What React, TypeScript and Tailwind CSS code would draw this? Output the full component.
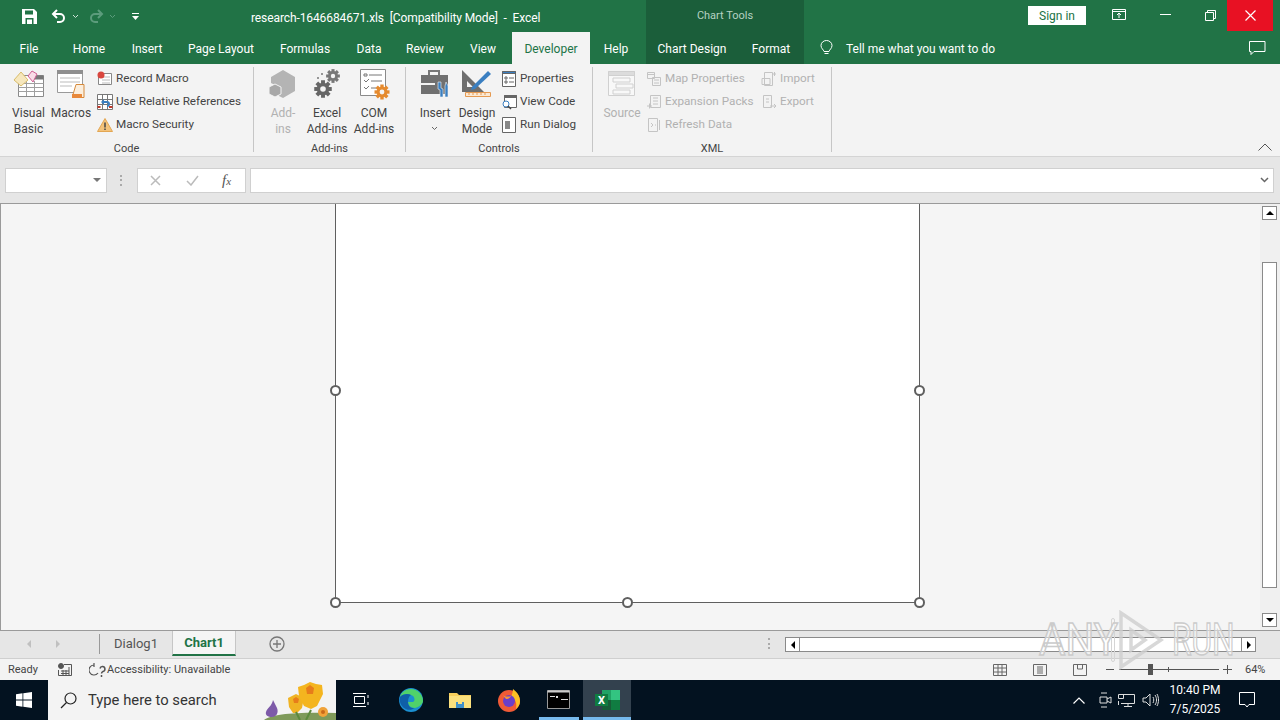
const uiFont = { fontFamily: 'Roboto, "Liberation Sans", sans-serif' };

function Undo({ className }: { className?: string }) {
  return (
    <svg className={className} width="16" height="16" viewBox="0 0 16 16" fill="none" stroke="currentColor" strokeWidth="2">
      <path d="M6 2 2 6l4 4" />
      <path d="M2 6h7a4 4 0 0 1 4 4v0a4 4 0 0 1-4 4H6" />
    </svg>
  );
}

function Caret({ className }: { className?: string }) {
  return (
    <svg className={className} width="7" height="5" viewBox="0 0 7 5" fill="none" stroke="currentColor">
      <path d="M1 1l2.5 2.5L6 1" />
    </svg>
  );
}

function TitleBar() {
  return (
    <div className="flex h-8 items-stretch text-white">
      <div className="flex w-[646px] items-center">
        <svg className="ml-[22px]" width="15" height="15" viewBox="0 0 15 15">
          <path d="M0 0h12l3 3v12H0z" fill="#fff" />
          <path d="M3 1.500h8v4H3zM3.500 9h8v6h-8z" fill="#217346" />
          <path d="M5 10.500h5V15H5z" fill="#fff" />
        </svg>
        <Undo className="ml-[14px]" />
        <Caret className="ml-[5px] text-[#cfe3d8]" />
        <Undo className="ml-[9px] -scale-x-100 text-[#5c9c7c]" />
        <Caret className="ml-[5px] text-[#5c9c7c]" />
        <svg className="ml-[15px]" width="9" height="9" viewBox="0 0 9 9" fill="#fff">
          <path d="M1 1h7v1H1zM1 4h7L4.500 8z" />
        </svg>
        <span className="ml-[111px] whitespace-pre pt-[3px] text-[12px] tracking-[-0.1px]">research-1646684671.xls  [Compatibility Mode]  -  Excel</span>
      </div>
      <div className="flex w-[158px] items-center justify-center bg-[#1b5e3a] pt-[1px] text-[11px] text-[#b5d2c2]">Chart Tools</div>
      <div className="flex flex-1 items-start">
        <div className="ml-[224px] mt-[6px] flex h-[19px] w-[58px] items-center justify-center bg-white text-[12px] text-[#217346]">Sign in</div>
        <svg className="ml-[26px] mt-[9px]" width="14" height="12" viewBox="0 0 14 12" fill="none" stroke="#fff">
          <path d="M.5.500h13v10H.5zM.5 2.500h13M7 9V4.500M5 6l2-2 2 2" />
        </svg>
        <div className="ml-[34px] mt-[14px] h-px w-[11px] bg-white" />
        <svg className="ml-[34px] mt-[10px]" width="11" height="11" viewBox="0 0 11 11" fill="none" stroke="#fff">
          <path d="M.5 2.500h8v8h-8zM2.500 2.500v-2h8v8h-2" />
        </svg>
        <div className="ml-[11px] flex h-[31px] w-[46px] items-center justify-center bg-[#e81123]">
          <svg width="11" height="11" viewBox="0 0 11 11" stroke="#fff" strokeWidth="1.2">
            <path d="M.5.500l10 10M10.500.500l-10 10" />
          </svg>
        </div>
      </div>
    </div>
  );
}

function TabLabel({ label, w, active }: { label: string; w: number; active?: boolean }) {
  return (
    <div
      className={`flex shrink-0 items-center justify-center pt-[1px] ${active ? "bg-[#f3f3f3] text-[#217346]" : "text-white"}`}
      style={{ width: w }}
    >
      {label}
    </div>
  );
}

function TabRow() {
  return (
    <div className="flex h-8 items-stretch text-[12px]">
      <TabLabel label="File" w={58} />
      <TabLabel label="Home" w={62} />
      <TabLabel label="Insert" w={54} />
      <TabLabel label="Page Layout" w={94} />
      <TabLabel label="Formulas" w={74} />
      <TabLabel label="Data" w={54} />
      <TabLabel label="Review" w={58} />
      <TabLabel label="View" w={58} />
      <TabLabel label="Developer" w={78} active />
      <TabLabel label="Help" w={52} />
      <div className="w-[4px]" />
      <div className="flex w-[158px] bg-[#1b5e3a]">
        <TabLabel label="Chart Design" w={92} />
        <TabLabel label="Format" w={66} />
      </div>
      <div className="flex flex-1 items-center text-white">
        <svg className="ml-[16px]" width="13" height="16" viewBox="0 0 13 16" fill="none" stroke="#fff">
          <path d="M4 11.500C3.500 9.500 1 8.500 1 5.500a5.500 5 0 0 1 11 0c0 3-2.500 4-3 6zM4.500 13.500h4" />
        </svg>
        <span className="ml-[13px] pt-[1px]">Tell me what you want to do</span>
        <svg className="ml-auto mr-[14px]" width="17" height="15" viewBox="0 0 17 15" fill="none" stroke="#fff">
          <path d="M.5.500h15.500v10H5l-3 3v-3H.5z" />
        </svg>
      </div>
    </div>
  );
}

function BigButton({ icon, lines, w, disabled, caret }: { icon: React.ReactNode; lines: string[]; w: number; disabled?: boolean; caret?: boolean }) {
  return (
    <div className={`flex shrink-0 flex-col items-center ${disabled ? "text-[#b1b1b1]" : "text-[#444]"}`} style={{ width: w }}>
      <div className="flex h-[34px] items-center justify-center">{icon}</div>
      <div className="mt-[4px] whitespace-nowrap text-center text-[12px] leading-[16px]">
        {lines.map((l) => (
          <div key={l}>{l}</div>
        ))}
        {caret ? <Caret className="mx-auto mt-[5px] text-[#666]" /> : null}
      </div>
    </div>
  );
}

function SmallButton({ icon, label, disabled }: { icon: React.ReactNode; label: string; disabled?: boolean }) {
  return (
    <div className={`flex h-[23px] items-center whitespace-nowrap text-[11.7px] ${disabled ? "text-[#b1b1b1]" : "text-[#444]"}`}>
      <span className="flex w-[16px] justify-center">{icon}</span>
      <span className="ml-[3px]">{label}</span>
    </div>
  );
}

function Group({ label, w, children }: { label: string; w: number; children: React.ReactNode }) {
  return (
    <div className="mt-[3px] flex h-[85px] shrink-0 flex-col border-r border-[#c6c6c6]" style={{ width: w }}>
      <div className="flex flex-1 items-start">{children}</div>
      <div className="-mb-[4px] text-center text-[11px] leading-[15px] text-[#444]">{label}</div>
    </div>
  );
}

function VisualBasicIcon() {
  return (
    <svg width="32" height="30" viewBox="0 0 32 30">
      <path d="M5.500 6.500h25v21h-25z" fill="#fff" stroke="#8a8a8a" />
      <path d="M20 6.500h10.500v4H20z" fill="#777" />
      <path d="M5.500 14.500h25M5.500 18.500h25M5.500 22.500h25M13.500 12v15M21.500 12v15" stroke="#a0a0a0" />
      <path d="M1 11l7-8 7 8-7 6z" fill="#f6e7bd" stroke="#d9bd6a" />
      <path d="M15 7l4-5 5 3-4 8z" fill="#f9dce7" stroke="#cf5f93" />
    </svg>
  );
}

function MacrosIcon() {
  return (
    <svg width="30" height="30" viewBox="0 0 30 30">
      <path d="M1.500 1.500h25v22h-25z" fill="#fff" stroke="#9a9a9a" />
      <path d="M1 1h26v4H1z" fill="#8f8f8f" />
      <path d="M4 9h20M4 13h20M4 17h12" stroke="#bbb" />
      <path d="M20 15.500h8v13H17v-3z" fill="#fbeedd" stroke="#d58a3c" />
      <path d="M16 25h10v4H16z" fill="#e8883a" />
    </svg>
  );
}

function AddinsIcon() {
  return (
    <svg width="28" height="30" viewBox="0 0 28 30" fill="#b4b4b4">
      <path d="M14 1l12 7v14l-12 7-4-2v-9l-8-4V8z" />
      <path d="M6 15l6 3v7l-6 3-6-3v-7z" fill="#a8a8a8" stroke="#f3f3f3" />
    </svg>
  );
}

function Gear({ x, y, r, fill }: { x: number; y: number; r: number; fill: string }) {
  const teeth = [0, 45, 90, 135];
  return (
    <g transform={`translate(${x} ${y})`}>
      {teeth.map((a) => (
        <rect key={a} x={-r * 0.28} y={-r * 1.25} width={r * 0.56} height={r * 2.5} fill={fill} transform={`rotate(${a})`} />
      ))}
      <circle r={r * 0.9} fill={fill} />
      <circle r={r * 0.4} fill="#f3f3f3" />
    </g>
  );
}

function ExcelAddinsIcon() {
  return (
    <svg width="28" height="32" viewBox="0 0 28 32">
      <Gear x={20} y={8} r={5.500} fill="#777" />
      <Gear x={10} y={21} r={7} fill="#666" />
      <circle cx="5" cy="10" r="1" fill="#777" />
      <circle cx="9" cy="6" r="1" fill="#777" />
    </svg>
  );
}

function ComAddinsIcon() {
  return (
    <svg width="32" height="32" viewBox="0 0 32 32">
      <path d="M2.500 1.500h25v26h-25z" fill="#fff" stroke="#8a8a8a" />
      <path d="M6 6h3v2H6zM11 7h13M6 12l2 2 3-3M13 13h11M6 19l2 2 3-3M13 20h5" fill="none" stroke="#777" />
      <Gear x={24} y={24} r={6} fill="#e58a2e" />
    </svg>
  );
}

function InsertIcon() {
  return (
    <svg width="30" height="30" viewBox="0 0 30 30">
      <path d="M9 6V2h10v4" fill="none" stroke="#777" strokeWidth="2" />
      <path d="M1 6h27v19H1z" fill="#707070" />
      <path d="M1 14h14v2H1z" fill="#f3f3f3" />
      <path d="M18 13h3v6l2 1v8h-3v-7l-2-1zM26 13l-1 4v11h3V17z" fill="#3a7fc1" stroke="#f3f3f3" strokeWidth=".6" />
    </svg>
  );
}

function DesignModeIcon() {
  return (
    <svg width="32" height="32" viewBox="0 0 32 32">
      <path d="M1 2l22 22H1zM6 13v6h6z" fill="#6e6e6e" fillRule="evenodd" />
      <path d="M11 19L27 3l3 3-16 15-4 1z" fill="#3a7fc1" />
      <path d="M4.500 24.500h25v4h-25z" fill="#fbe9d4" stroke="#e59a52" />
      <path d="M8 25v2M12 25v2M16 25v2M20 25v2M24 25v2" stroke="#e59a52" />
    </svg>
  );
}

function Doc({ children, stroke = "#666" }: { children?: React.ReactNode; stroke?: string }) {
  return (
    <svg width="16" height="16" viewBox="0 0 16 16" fill="none" stroke={stroke}>
      {children}
    </svg>
  );
}

function SourceIcon() {
  return (
    <svg width="30" height="30" viewBox="0 0 30 30" fill="none" stroke="#d0d0d0">
      <path d="M1.500 2.500h26v24h-26z" fill="#f8f8f8" />
      <path d="M1.500 2.500h26v4h-26z" fill="#dcdcdc" />
      <path d="M6 9h17v4H6zM9 15h17v4H9zM6 21h17v4H6z" />
    </svg>
  );
}

function Ribbon() {
  return (
    <div className="relative flex h-[93px] border-b border-[#d4d4d4] bg-[#f3f3f3]">
      <Group label="Code" w={254}>
        <div className="flex pl-[5px]">
          <BigButton w={47} icon={<VisualBasicIcon />} lines={["Visual", "Basic"]} />
          <BigButton w={38} icon={<MacrosIcon />} lines={["Macros"]} />
          <div className="ml-[7px] flex flex-col">
            <SmallButton
              label="Record Macro"
              icon={
                <svg width="16" height="16" viewBox="0 0 16 16">
                  <path d="M1.500 2.500h13v11h-13z" fill="#fff" stroke="#888" />
                  <path d="M5 6h8M5 9h8M5 12h8" stroke="#bbb" />
                  <circle cx="4" cy="4" r="3.500" fill="#d9463e" />
                </svg>
              }
            />
            <SmallButton
              label="Use Relative References"
              icon={
                <svg width="16" height="16" viewBox="0 0 16 16" fill="none">
                  <path d="M.500.500h15v15H.500zM.500 5.500h15M.500 10.500h15M5.500.500v15M10.500.500v15" fill="#fff" stroke="#777" />
                  <path d="M4 8l3-3v2h3a3 3 0 0 1 0 6v-2a1 1 0 0 0 0-2H7v2z" fill="#3a7fc1" />
                  <path d="M.500 13h3M12 13h3.500" stroke="#c0392b" strokeWidth="2" />
                </svg>
              }
            />
            <SmallButton
              label="Macro Security"
              icon={
                <svg width="16" height="14" viewBox="0 0 16 14">
                  <path d="M8 .500l7.500 13H.500z" fill="#f3c27a" stroke="#e3a652" />
                  <path d="M7.250 4.500h1.500v5h-1.500zM7.250 10.500h1.500V12h-1.500z" fill="#444" />
                </svg>
              }
            />
          </div>
        </div>
      </Group>
      <Group label="Add-ins" w={152}>
        <div className="flex pl-[6px]">
          <BigButton w={46} icon={<AddinsIcon />} lines={["Add-", "ins"]} disabled />
          <BigButton w={42} icon={<ExcelAddinsIcon />} lines={["Excel", "Add-ins"]} />
          <BigButton w={52} icon={<ComAddinsIcon />} lines={["COM", "Add-ins"]} />
        </div>
      </Group>
      <Group label="Controls" w={187}>
        <div className="flex pl-[8px]">
          <BigButton w={42} icon={<InsertIcon />} lines={["Insert"]} caret />
          <BigButton w={42} icon={<DesignModeIcon />} lines={["Design", "Mode"]} />
          <div className="ml-[3px] flex flex-col">
            <SmallButton
              label="Properties"
              icon={
                <Doc>
                  <path d="M1.500 .500h13v15h-13z" fill="#fff" />
                  <path d="M1.500 .500h13v2h-13z" fill="#3a7fc1" />
                  <path d="M4 6h2v2H4zM8 7h5M4 10h2v2H4zM8 11h5" />
                </Doc>
              }
            />
            <SmallButton
              label="View Code"
              icon={
                <Doc>
                  <path d="M3.500 1.500h12v12h-12z" fill="#fff" />
                  <path d="M3.500 1.500h12v2h-12z" fill="#666" />
                  <circle cx="5" cy="10" r="3" stroke="#3a7fc1" fill="#fff" />
                  <path d="M7 12l3 3" stroke="#444" strokeWidth="1.500" />
                </Doc>
              }
            />
            <SmallButton
              label="Run Dialog"
              icon={
                <Doc>
                  <path d="M1.500 .500h13v15h-13z" fill="#fff" />
                  <path d="M4 4h5v8H4z" fill="#888" stroke="none" />
                </Doc>
              }
            />
          </div>
        </div>
      </Group>
      <Group label="XML" w={239}>
        <div className="flex pl-[8px]">
          <BigButton w={42} icon={<SourceIcon />} lines={["Source"]} disabled />
          <div className="ml-[3px] flex w-[115px] flex-col">
            <SmallButton disabled label="Map Properties" icon={<Doc stroke="#c4c4c4"><path d="M1.500 1.500h7v6h-7zM6.500 6.500h8v8h-8zM1.500 3.500h7M8 9h5M8 12h5" /></Doc>} />
            <SmallButton disabled label="Expansion Packs" icon={<Doc stroke="#c4c4c4"><path d="M4.500 1.500h10v12h-10zM7 4h5M7 7h5M7 10h5M1 12h5M3.500 9.500v5" /></Doc>} />
            <SmallButton disabled label="Refresh Data" icon={<Doc stroke="#c4c4c4"><path d="M2.500 1.500h9v13h-9zM13.500 3v10M5 6l2 2-2 2M9 8h1" /></Doc>} />
          </div>
          <div className="flex flex-col">
            <SmallButton disabled label="Import" icon={<Doc stroke="#c4c4c4"><path d="M3.500 1.500h8v13h-8zM1 7.500h8v6H1zM12 3h3M13.500 1v4" /></Doc>} />
            <SmallButton disabled label="Export" icon={<Doc stroke="#c4c4c4"><path d="M2.500 1.500h8v12h-8zM5 5h3M5 8h3M9 12h6M13 10l2 2-2 2" /></Doc>} />
          </div>
        </div>
      </Group>
      <svg className="absolute right-[8px] top-[79px]" width="14" height="8" viewBox="0 0 14 8" fill="none" stroke="#555">
        <path d="M.5 7.500l6.500-6.500 6.500 6.500" />
      </svg>
    </div>
  );
}

function FormulaBar() {
  return (
    <div className="flex h-[46px] items-center bg-[#e6e6e6] pl-[5px] pr-[6px]">
      <div className="flex h-[25px] w-[102px] items-center justify-end border border-[#d0d0d0] bg-white pr-[5px]">
        <div className="h-0 w-0 border-x-[4px] border-t-[4px] border-x-transparent border-t-[#777]" />
      </div>
      <div className="ml-[13px] flex h-[11px] w-[3px] flex-col justify-between">
        <div className="h-[2px] w-[2px] bg-[#aaa]" />
        <div className="h-[2px] w-[2px] bg-[#aaa]" />
        <div className="h-[2px] w-[2px] bg-[#aaa]" />
      </div>
      <div className="ml-[14px] flex h-[25px] w-[109px] items-center border border-[#d0d0d0] bg-white">
        <svg className="ml-[12px]" width="11" height="11" viewBox="0 0 11 11" stroke="#bbb" strokeWidth="1.5">
          <path d="M1 1l9 9M10 1l-9 9" />
        </svg>
        <svg className="ml-[25px]" width="13" height="11" viewBox="0 0 13 11" fill="none" stroke="#bbb" strokeWidth="1.500">
          <path d="M1 6l4 4 7-9" />
        </svg>
        <span className="ml-[23px] text-[15px] italic leading-none text-[#555]" style={{ fontFamily: '"Liberation Serif", serif' }}>
          f<span className="text-[11px]">x</span>
        </span>
      </div>
      <div className="ml-[4px] flex h-[25px] flex-1 items-center justify-end border border-[#d0d0d0] bg-white pr-[4px]">
        <svg width="9" height="6" viewBox="0 0 9 6" fill="none" stroke="#666" strokeWidth="1.500">
          <path d="M1 1l3.500 3.500L8 1" />
        </svg>
      </div>
    </div>
  );
}

function Handle({ className }: { className: string }) {
  return <div className={`absolute h-[11px] w-[11px] rounded-full border-2 border-[#5f5f5f] bg-white ${className}`} />;
}

function SheetArea() {
  return (
    <div className="flex h-[428px] border-y border-l border-[#9a9a9a] bg-[#f5f5f5]">
      <div className="flex-1 pl-[334px]">
        <div className="relative h-[399px] w-[585px] border-x border-b border-[#5f5f5f] bg-white">
          <Handle className="-left-[6px] top-[181px]" />
          <Handle className="-right-[6px] top-[181px]" />
          <Handle className="-bottom-[6px] -left-[6px]" />
          <Handle className="-bottom-[6px] left-[286px]" />
          <Handle className="-bottom-[6px] -right-[6px]" />
        </div>
      </div>
      <div className="flex w-[20px] flex-col items-center bg-[#f0f0f0] pr-[1px] pt-[2px]">
        <ScrollArrow dir="up" />
        <div className="mt-[42px] h-[326px] w-[15px] border border-[#8a8a8a] bg-white" />
        <div className="flex-1" />
        <ScrollArrow dir="down" className="mb-[3px]" />
      </div>
    </div>
  );
}

function ScrollArrow({ dir, className = "" }: { dir: "up" | "down"; className?: string }) {
  const arrow = dir === "up"
    ? "border-x-[4px] border-b-[4px] border-x-transparent border-b-black"
    : "border-x-[4px] border-t-[4px] border-x-transparent border-t-black";
  return (
    <div className={`flex h-[14px] w-[15px] shrink-0 items-center justify-center border border-[#8a8a8a] bg-white ${className}`}>
      <div className={`h-0 w-0 ${arrow}`} />
    </div>
  );
}

function SheetTabs() {
  return (
    <div className="flex h-[27px] bg-[#e6e6e6]">
      <div className="flex h-[26px] w-[100px] items-center">
        <div className="ml-[27px] h-0 w-0 border-y-[4px] border-r-[4px] border-y-transparent border-r-[#c0c0c0]" />
        <div className="ml-[25px] h-0 w-0 border-y-[4px] border-l-[4px] border-y-transparent border-l-[#c0c0c0]" />
        <div className="ml-auto h-[20px] w-px bg-[#999]" />
      </div>
      <div className="flex h-[25px] w-[72px] items-center justify-center text-[13px] text-[#555]">Dialog1</div>
      <div className="flex h-[25px] w-[64px] items-center justify-center border-x border-b-2 border-x-[#c6c6c6] border-b-[#217346] bg-[#f5f5f5] text-[13px] font-bold text-[#217346]">Chart1</div>
      <svg className="ml-[33px] mt-[5px]" width="16" height="16" viewBox="0 0 16 16" fill="none" stroke="#777" strokeWidth="1.300">
        <circle cx="8" cy="8" r="7" />
        <path d="M8 4v8M4 8h8" />
      </svg>
      <div className="ml-[483px] mt-[7px] flex h-[11px] w-[3px] flex-col justify-between">
        <div className="h-[2px] w-[2px] bg-[#aaa]" />
        <div className="h-[2px] w-[2px] bg-[#aaa]" />
        <div className="h-[2px] w-[2px] bg-[#aaa]" />
      </div>
      <div className="ml-[14px] mt-[6px] flex h-[15px] w-[471px] border border-[#8a8a8a] bg-white">
        <div className="flex h-full w-[14px] items-center justify-center border-r border-[#8a8a8a]">
          <div className="h-0 w-0 border-y-[4px] border-r-[4px] border-y-transparent border-r-black" />
        </div>
        <div className="flex-1" />
        <div className="flex h-full w-[14px] items-center justify-center border-l border-[#8a8a8a]">
          <div className="h-0 w-0 border-y-[4px] border-l-[4px] border-y-transparent border-l-black" />
        </div>
      </div>
    </div>
  );
}

function StatusBar() {
  return (
    <div className="flex h-[22px] items-center border-t border-[#cfcfcf] bg-[#f3f3f3] text-[11px] text-[#444]">
      <span className="ml-[8px] pt-[1px]">Ready</span>
      <svg className="ml-[20px]" width="14" height="13" viewBox="0 0 14 13" fill="none" stroke="#555">
        <circle cx="3" cy="3" r="2.500" fill="#555" />
        <path d="M6 1.500h7.500v11H.500V7M3 8h8M3 10.500h8M5 7v5M8 7v5M11 4v8" />
      </svg>
      <svg className="ml-[17px]" width="17" height="14" viewBox="0 0 17 14" fill="none" stroke="#555" strokeWidth="1.200">
        <path d="M5 2a5 5 0 1 0 4 8M5 0v4" />
        <path d="M11 5.500a2.500 2.500 0 1 1 3 3c-1 .5-1.500 1-1.500 2M12.500 12v2" strokeWidth="1.500" />
      </svg>
      <span className="ml-[1px] pt-[1px]">Accessibility: Unavailable</span>
      <div className="ml-auto flex items-center">
        <svg width="14" height="12" viewBox="0 0 14 12" fill="none" stroke="#666">
          <path d="M.5.500h13v11H.5zM.5 4h13M.5 8h13M5 .5v11M9 .5v11" />
        </svg>
        <svg className="ml-[26px]" width="14" height="12" viewBox="0 0 14 12" fill="none" stroke="#666">
          <path d="M.5.500h13v11H.5zM4 3h6M4 5h6M4 7h6M4 9h6" />
        </svg>
        <svg className="ml-[26px]" width="14" height="12" viewBox="0 0 14 12" fill="none" stroke="#666">
          <path d="M.5.500h13v11H.5zM4.500.500V5h5V.5" />
        </svg>
        <div className="ml-[19px] h-px w-[8px] bg-[#555]" />
        <div className="relative ml-[5px] h-px w-[100px] bg-[#555]">
          <div className="absolute left-[29px] -top-[5px] h-[11px] w-[5px] bg-[#555]" />
          <div className="absolute left-[49px] -top-[2px] h-[5px] w-px bg-[#555]" />
        </div>
        <svg className="ml-[4px]" width="9" height="9" viewBox="0 0 9 9" stroke="#555">
          <path d="M0 4.500h9M4.500 0v9" />
        </svg>
        <span className="ml-[13px] mr-[14px] w-[21px] pt-[1px]">64%</span>
      </div>
    </div>
  );
}

function FlowerArt() {
  return (
    <svg className="ml-auto shrink-0" width="80" height="40" viewBox="0 0 80 40">
      <path d="M8 40c8-6 30-8 72-7v7z" fill="#7f9a5a" />
      <path d="M17 20l4 8c2 5-1 9-5 9-4 0-7-2-6-5 1-4 6-6 7-12z" fill="#7d5aa8" />
      <path d="M32 18l4-2 4-2 4 2 4 1-2 11-5 5h-4l-4-6z" fill="#f0b323" />
      <path d="M37 19l3-2 3 2-1 4h-4z" fill="#e77d1a" />
      <path d="M42 7l6-2 6-3 6 2 6 1 1 9-6 12-6 3-7-3-5-10z" fill="#f4b51f" />
      <path d="M50 8l4-3 4 3-1 6h-6z" fill="#e77d1a" />
      <circle cx="67" cy="32" r="5" fill="#f0a33a" />
      <circle cx="67" cy="32" r="2" fill="#c96a1a" />
      <path d="M40 32l4 8M55 30l-5 10" stroke="#5d8a3d" strokeWidth="2" fill="none" />
    </svg>
  );
}

function Taskbar() {
  return (
    <div className="flex h-[40px] items-stretch bg-[#031220] text-white">
      <div className="flex w-[48px] items-center justify-center">
        <svg width="16" height="16" viewBox="0 0 16 16" fill="#fff">
          <path d="M0 2.200l6.500-.9v6.300H0zM7.300 1.200L16 0v7.600H7.300zM0 8.400h6.500v6.300L0 13.800zM7.300 8.400H16V16l-8.700-1.200z" />
        </svg>
      </div>
      <div className="flex w-[288px] items-center overflow-hidden bg-[#f3f3f3] text-[#333]">
        <svg className="ml-[12px] shrink-0" width="17" height="17" viewBox="0 0 17 17" fill="none" stroke="#222" strokeWidth="1.200">
          <circle cx="10.500" cy="6.500" r="5.500" />
          <path d="M6.500 10.500L1 16" />
        </svg>
        <span className="ml-[11px] whitespace-nowrap pt-[1px] text-[14.8px]">Type here to search</span>
        <FlowerArt />
      </div>
      <div className="flex w-[50px] items-center justify-center">
        <svg width="16" height="16" viewBox="0 0 16 16" fill="none" stroke="#fff">
          <path d="M1.500 4.500h10v7h-10zM0 1.500h13M0 14.500h13M15 3v3M15 10v3" />
        </svg>
      </div>
      <div className="flex w-[50px] items-center justify-center">
        <svg width="24" height="24" viewBox="0 0 24 24">
          <circle cx="12" cy="12" r="12" fill="#1b8fd1" />
          <path d="M24 13c0-7-6-12-12-12C6 1 2 5 1 9c3-3 9-4 13-1 2 2 2 5 0 6H9c0 3 3 6 7 6 4-1 8-4 8-7z" fill="#50d26a" />
          <path d="M9 14c0 4 3 7 7 6-6 4-13 1-15-6-1-2 0-4 0-5 2-3 8-4 11-2-2 1-3 4-3 7z" fill="#0f5fa8" />
        </svg>
      </div>
      <div className="flex w-[48px] items-center justify-center">
        <svg width="22" height="20" viewBox="0 0 22 20">
          <path d="M0 3h8l2 2h12v13H0z" fill="#f7cf5c" />
          <path d="M0 6h22v12H0z" fill="#fbe07d" />
          <path d="M7 12h8v6H7z" fill="#3f8fc9" />
          <path d="M9 12h4v2H9z" fill="#fbe07d" />
        </svg>
      </div>
      <div className="flex w-[50px] items-center justify-center">
        <svg width="24" height="24" viewBox="0 0 24 24">
          <circle cx="12" cy="13" r="11" fill="#ef5a36" />
          <path d="M16 1c4 3 7 7 7 12 0 4-2 6-4 8 1-5 0-10-5-12 1-3 2-5 2-8z" fill="#fbbf24" />
          <circle cx="12" cy="13" r="6" fill="#6a3fc9" />
          <path d="M5 6c2 3 6 3 9 2-1 2-3 3-5 3z" fill="#f79433" />
        </svg>
      </div>
      <div className="flex w-[49px] flex-col items-center pt-[10px]">
        <svg width="23" height="19" viewBox="0 0 23 19">
          <path d="M.5.500h22v18H.5z" fill="#000" stroke="#999" />
          <path d="M.5.500h22v2H.5z" fill="#ccc" />
          <path d="M3 6h5v1H3zM9 6h2v2H9zM14 9h7v1h-7z" fill="#ddd" />
        </svg>
        <div className="mt-auto h-[3px] w-[40px] bg-[#76b9ed]" />
      </div>
      <div className="flex w-[48px] flex-col items-center justify-center border-b-[3px] border-[#76b9ed] bg-[#33414e] pt-[3px]">
        <svg width="25" height="20" viewBox="0 0 25 20">
          <path d="M7 0h18v20H7z" fill="#21a366" />
          <path d="M16 0h9v10h-9z" fill="#33c481" />
          <path d="M7 10h9v10H7z" fill="#185c37" />
          <path d="M16 10h9v10h-9z" fill="#107c41" />
          <path d="M0 4h13v12H0z" fill="#107c41" />
          <text x="6.500" y="14" textAnchor="middle" fontSize="11" fontWeight="700" fill="#fff">X</text>
        </svg>
      </div>
      <div className="ml-auto flex items-center">
        <svg width="12" height="7" viewBox="0 0 12 7" fill="none" stroke="#fff" strokeWidth="1.200">
          <path d="M.5 6.500l5.500-5.500 5.500 5.500" />
        </svg>
        <svg className="ml-[13px]" width="14" height="16" viewBox="0 0 14 16" fill="none" stroke="#ddd">
          <path d="M2 5h7v6H2zM9 7l4-2v6l-4-2M3 1h6M3 15h6" />
        </svg>
        <svg className="ml-[6px]" width="17" height="14" viewBox="0 0 17 14" fill="none" stroke="#ddd">
          <path d="M3 1.500h13.500v9H3M.5 1.500h5v4h-5zM.5 8v4M10 10.500v3M6 13.500h8" />
        </svg>
        <svg className="ml-[7px]" width="17" height="14" viewBox="0 0 17 14" fill="none" stroke="#ddd">
          <path d="M1 5h3l4-4v12L4 9H1zM11 4c1 2 1 4 0 6M13 2c2 3 2 7 0 10M15 1c2 4 2 8 0 12" />
        </svg>
        <div className="ml-[8px] w-[56px] whitespace-nowrap text-center text-[12px] leading-[19px]">
          <div>10:40 PM</div>
          <div>7/5/2025</div>
        </div>
        <svg className="ml-[16px] mr-[25px]" width="16" height="16" viewBox="0 0 16 16" fill="none" stroke="#fff">
          <path d="M.5.500h15v12H10L8 15l-2-2.500H.5z" />
        </svg>
      </div>
    </div>
  );
}

function Watermark() {
  return (
    <div className="pointer-events-none absolute left-[1039px] top-[610px] flex h-[60px] items-center text-[44px] leading-none text-white/50 [-webkit-text-stroke:1.5px_#cbcbcb]">
      <span className="w-[66px] origin-left scale-x-[.92]">ANY</span>
      <div className="ml-[6px] h-[44px] w-[4px] shrink-0 rounded-sm border border-[#d5d5d5]" />
      <svg className="ml-[3px] shrink-0" width="46" height="60" viewBox="0 0 46 60" fill="none" stroke="#cfcfcf" strokeWidth="3.500" opacity=".8">
        <path d="M3 3l40 27-40 27zM13 20l14 10-14 10z" />
      </svg>
      <span className="ml-[8px] w-[62px] origin-left scale-x-[.72]">RUN</span>
    </div>
  );
}

export default function App() {
  return (
    <div className="relative flex h-[720px] w-[1280px] flex-col overflow-hidden bg-[#f5f5f5]" style={uiFont}>
      <div className="bg-[#217346]">
        <TitleBar />
        <TabRow />
      </div>
      <Ribbon />
      <FormulaBar />
      <SheetArea />
      <SheetTabs />
      <StatusBar />
      <Taskbar />
      <Watermark />
    </div>
  );
}
